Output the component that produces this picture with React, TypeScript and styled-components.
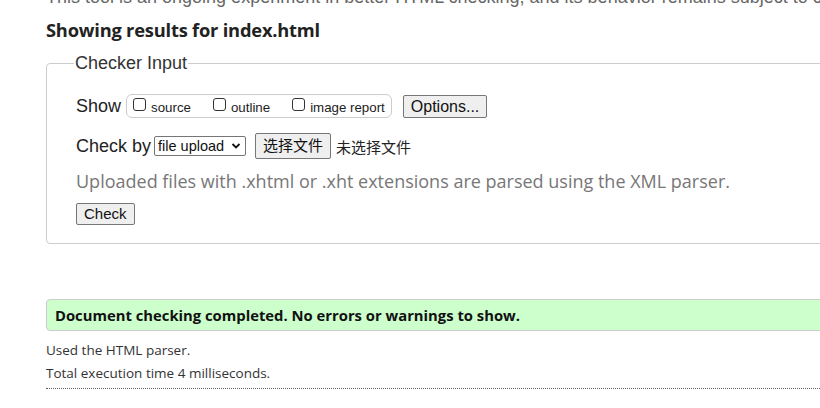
import { styled, createGlobalStyle } from "styled-components";

const GlobalStyle = createGlobalStyle`
  html, body {
    margin: 0;
    padding: 0;
    background: #fff;
    overflow: hidden;
  }
  body {
    font-family: "Liberation Sans", Arial, sans-serif;
    color: #222;
  }
`;

const Page = styled.div`
  width: 820px;
  height: 408px;
  overflow: hidden;
  padding-left: 46px;
  box-sizing: border-box;
`;

const Intro = styled.p`
  margin: -12px 0 0;
  font-size: 18px;
  line-height: 18px;
  color: #666;
  white-space: nowrap;
`;

const Heading = styled.h2`
  margin: 11px 0 0;
  font-family: "Open Sans", "Noto Sans", sans-serif;
  font-size: 18.3px;
  line-height: 25px;
  font-weight: 700;
  color: #222;
  letter-spacing: -0.2px;
`;

const Fieldset = styled.fieldset`
  margin: 11px -40px 0 0;
  padding: 4px 29px 18px;
  border: 1px solid #ccc;
  border-radius: 4px;
`;

const Legend = styled.legend`
  padding: 0 1px;
  margin-left: -2px;
  font-size: 18px;
  color: #333;
`;

const Row = styled.div<{ $top: number; $h: number }>`
  display: flex;
  align-items: center;
  height: ${(p) => p.$h}px;
  margin-top: ${(p) => p.$top}px;
`;

const Label = styled.span`
  font-size: 18px;
  color: #222;
  margin-right: 3px;
`;

const CheckGroup = styled.div`
  display: flex;
  align-items: center;
  height: 22px;
  padding: 0 6px;
  border: 1px solid #ccc;
  border-radius: 6px;
  gap: 22px;
  margin-left: 2px;
`;

const CheckItem = styled.label`
  display: flex;
  align-items: center;
  font-size: 13.3px;
  color: #222;
  padding-top: 2px;
`;

const Box = styled.span`
  width: 11px;
  height: 11px;
  border: 1px solid #333;
  border-radius: 3px;
  margin-right: 5px;
  margin-top: -6px;
`;

const Button = styled.button<{ $size?: number; $lh?: number }>`
  font-family: "Liberation Sans", Arial, "Noto Sans CJK SC", sans-serif;
  font-size: ${(p) => p.$size ?? 16}px;
  line-height: ${(p) => p.$lh ?? 19}px;
  color: #111;
  background: #efefef;
  border: 1px solid #767676;
  border-radius: 2px;
  padding: 1px 7px;
`;

const Select = styled.span`
  display: inline-flex;
  align-items: center;
  justify-content: space-between;
  box-sizing: border-box;
  width: 92px;
  height: 20px;
  padding: 0 4px 0 3px;
  border: 1px solid #767676;
  border-radius: 2px;
  font-size: 14.5px;
  color: #111;
`;

const Note = styled.span`
  font-family: "Noto Sans CJK SC", sans-serif;
  font-size: 15px;
  color: #222;
  margin-left: 5px;
`;

const Hint = styled.p`
  margin: 10px 0 0;
  font-family: "Open Sans", "Noto Sans", sans-serif;
  font-size: 18px;
  color: #777;
  line-height: 24px;
`;

const CheckRow = styled.div`
  margin-top: 10px;
  height: 22px;
  display: flex;
`;

const Success = styled.div`
  margin: 55px -40px 0 0;
  padding: 5px 8px;
  background: #ccffcc;
  border: 1px solid #ccc;
  border-radius: 4px;
  font-family: "Open Sans", "Noto Sans", sans-serif;
  font-size: 14.8px;
  line-height: 20px;
  font-weight: 700;
  color: #111;
`;

const Stats = styled.div`
  margin: 8px -40px 0 0;
  padding-bottom: 3px;
  border-bottom: 1px dotted #666;
`;

const Meta = styled.p`
  margin: 0;
  font-family: "Open Sans", "Noto Sans", sans-serif;
  font-size: 13.5px;
  line-height: 23px;
  color: #333;
`;

const Chevron = () => (
  <svg width="10" height="8" viewBox="0 0 10 8">
    <path d="M1.5 2 L5 5.5 L8.5 2" fill="none" stroke="#111" strokeWidth="1.8" />
  </svg>
);

const options = ["source", "outline", "image report"];

export default function App() {
  return (
    <Page>
      <GlobalStyle />
      <Intro>
        This tool is an ongoing experiment in better HTML checking, and its behavior remains subject to change
      </Intro>
      <Heading>Showing results for index.html</Heading>
      <Fieldset>
        <Legend>Checker Input</Legend>
        <Row $top={16} $h={24}>
          <Label>Show</Label>
          <CheckGroup>
            {options.map((o) => (
              <CheckItem key={o}>
                <Box />
                {o}
              </CheckItem>
            ))}
          </CheckGroup>
          <Button style={{ marginLeft: 11 }}>Options...</Button>
        </Row>
        <Row $top={15} $h={26}>
          <Label>Check by</Label>
          <Select>
            file upload <Chevron />
          </Select>
          <Button $size={15} $lh={22} style={{ marginLeft: 9 }}>
            选择文件
          </Button>
          <Note>未选择文件</Note>
        </Row>
        <Hint>Uploaded files with .xhtml or .xht extensions are parsed using the XML parser.</Hint>
        <CheckRow>
          <Button $size={15} $lh={18}>Check</Button>
        </CheckRow>
      </Fieldset>
      <Success>Document checking completed. No errors or warnings to show.</Success>
      <Stats>
        <Meta>Used the HTML parser.</Meta>
        <Meta>Total execution time 4 milliseconds.</Meta>
      </Stats>
    </Page>
  );
}
